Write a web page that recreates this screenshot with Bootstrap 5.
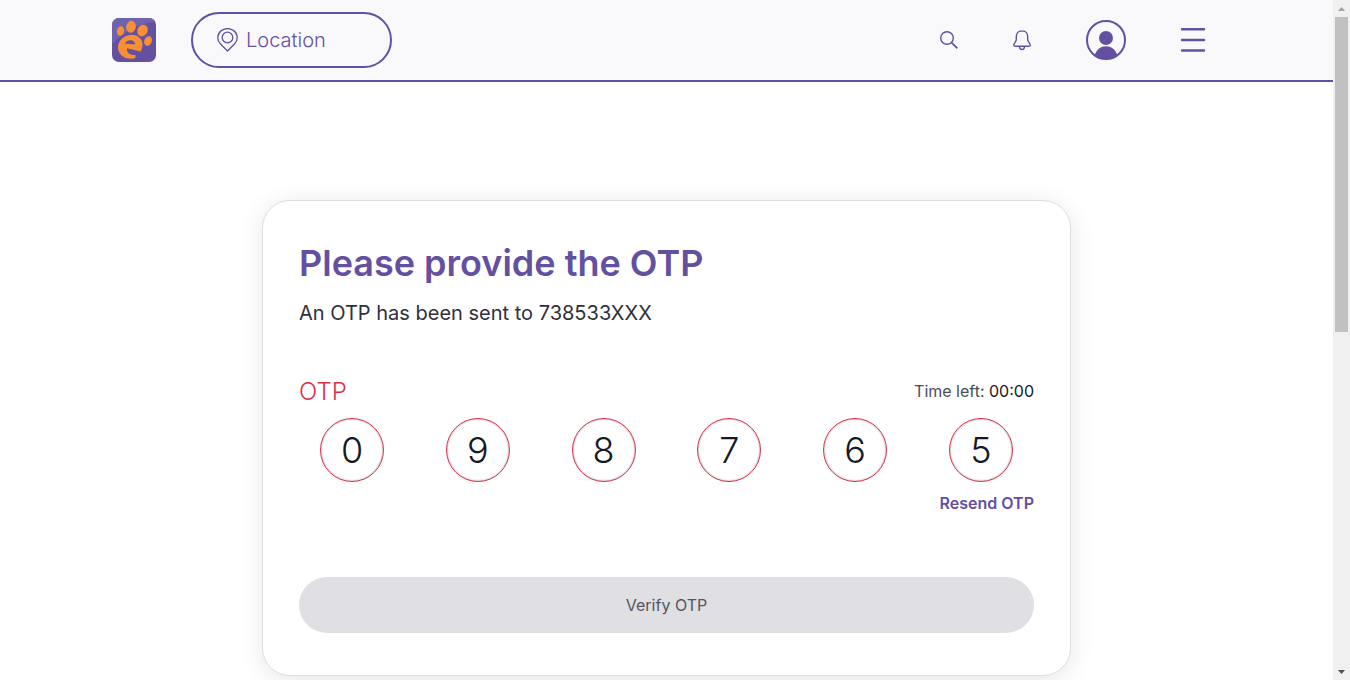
<!DOCTYPE html>
<html lang="en">
<head>
<meta charset="utf-8">
<meta name="viewport" content="width=device-width, initial-scale=1">
<title>Verify OTP</title>
<link href="https://cdn.jsdelivr.net/npm/bootstrap@5.3.0/dist/css/bootstrap.min.css" rel="stylesheet">
<style>
  :root { --brand: #6350a1; --ink: #171725; --alert: #dc3048; }
  body { font-family: Inter, "Liberation Sans", sans-serif; color: var(--ink); }
  .brand-text { color: var(--brand); }
  .topbar { height: 82px; background: #f9f9fc; border-bottom: 2px solid var(--brand); }
  .topbar-inner { max-width: 1109px; padding-right: 15px; }
  .location-btn { width: 201px; height: 56px; margin-left: 35px; padding: 0 24px; border: 2px solid var(--brand); border-radius: 28px; font-size: 20px; font-weight: 300; color: var(--brand); }
  .icon-btn { border: 0; background: none; padding: 0; color: var(--brand); line-height: 0; }
  .tools { column-gap: 54px; }
  .otp-card { max-width: 809px; margin-top: 118px; padding: 42px 36px; border: 1px solid #dedee2; border-radius: 28px; box-shadow: 0 4px 24px rgba(0, 0, 0, .1); }
  .otp-title { font-size: 36px; line-height: 40px; font-weight: 600; }
  .otp-note { font-size: 20px; line-height: 28px; font-weight: 400; color: #30303d; }
  .otp-label { font-size: 24px; line-height: 34px; font-weight: 300; color: var(--alert); }
  .text-16 { font-size: 16px; line-height: 24px; }
  .timer { font-weight: 400; color: #4c4c58; }
  .timer strong { font-weight: 400; color: var(--ink); }
  .digits { margin: 9px 0; padding: 0 21px; }
  .digit { width: 64px; height: 64px; padding: 0; border: 1px solid var(--alert); border-radius: 50%; font-size: 36px; font-weight: 300; color: var(--ink); box-shadow: inset 0 0 2px rgba(0, 0, 0, .45); }
  .resend { font-weight: 600; }
  .verify-btn { height: 56px; margin-top: 62px; border: 0; border-radius: 28px; background: #e0dfe4; color: #55555f; font-weight: 400; }
  .scroll-rail { width: 17px; background: #f0f0f0; }
  .scroll-thumb { width: 13px; height: 315px; background: #c1c1c1; }
  .scroll-cap { height: 17px; }
</style>
</head>
<body class="d-flex vh-100 overflow-hidden bg-white">
<div class="flex-grow-1 overflow-hidden">
  <header class="topbar d-flex">
    <nav class="topbar-inner w-100 mx-auto d-flex align-items-center" aria-label="Main">
      <a href="#" class="d-flex" aria-label="Home">
        <svg width="44" height="44" viewBox="0 0 44 44">
          <defs><clipPath id="tile"><rect width="44" height="44" rx="7"/></clipPath></defs>
          <g clip-path="url(#tile)">
            <rect width="44" height="44" fill="#6350a1"/>
            <path d="M0 0H44V4C29 5 15 11 0 26Z" fill="#7063ae"/>
          </g>
          <g fill="#f98f35">
            <ellipse cx="8.500" cy="13" rx="3.600" ry="4.900" transform="rotate(10 8.500 13)"/>
            <ellipse cx="19" cy="8.800" rx="4.800" ry="6" transform="rotate(12 19 8.800)"/>
            <ellipse cx="30.500" cy="12.500" rx="5" ry="6" transform="rotate(30 30.500 12.500)"/>
            <ellipse cx="36" cy="23" rx="3.700" ry="5" transform="rotate(22 36 23)"/>
            <path fill-rule="evenodd" d="M18 17C25 16 31 21 30.500 27C30.500 30 29.500 32 28.500 33.500L15 30.200C14 34 18 37.200 23 37C24.500 38.500 23.500 40.500 21 40.800C12 41.500 6 36 6 29.500C6 23 11 18 18 17ZM13 25.500L23 26.500C23.500 21.500 15 20.500 13 25.500Z"/>
          </g>
        </svg>
      </a>
      <button type="button" class="location-btn d-flex align-items-center bg-transparent">
        <svg class="me-2" width="21" height="24" viewBox="0 0 21 24" fill="none" stroke="#6350a1" stroke-width="1.300">
          <path d="M10.500 23L3.300 15.700C-.7 11.500 .4 5.100 4.700 2.400C8.300.1 12.700.1 16.300 2.400C20.600 5.100 21.700 11.500 17.700 15.700Z"/>
          <circle cx="10.500" cy="9.500" r="5.300"/>
        </svg>
        <span>Location</span>
      </button>
      <div class="tools ms-auto d-flex align-items-center">
        <button type="button" class="icon-btn" aria-label="Search">
          <svg width="18" height="20" viewBox="0 0 18 20" fill="none" stroke="currentColor" stroke-width="1.400"><circle cx="7" cy="8" r="6.300"/><path d="M11.600 12.600L17.400 18.400" stroke-width="1.700"/></svg>
        </button>
        <button type="button" class="icon-btn" aria-label="Notifications">
          <svg width="20" height="22" viewBox="0 0 20 22" fill="none" stroke="currentColor" stroke-width="1.400"><path d="M10 1.700C6.500 1.700 4.300 4.200 4.300 7.500V10.500C4.300 13 1.700 14.300 1.700 15.900C1.700 16.800 2.200 17.300 3.200 17.300H16.800C17.800 17.300 18.300 16.800 18.300 15.900C18.300 14.300 15.700 13 15.700 10.500V7.500C15.700 4.200 13.500 1.700 10 1.700ZM7.500 17.500C7.500 21.500 12.500 21.500 12.500 17.500"/></svg>
        </button>
        <button type="button" class="icon-btn" aria-label="Account">
          <svg width="40" height="40" viewBox="0 0 40 40"><defs><clipPath id="face"><circle cx="20" cy="20" r="19"/></clipPath></defs><g fill="currentColor" clip-path="url(#face)"><circle cx="20" cy="18" r="7"/><path d="M8.500 36C10.500 29 15 26.300 20 26.300S29.500 29 31.500 36L27 40H13Z"/></g><circle cx="20" cy="20" r="19" fill="none" stroke="currentColor" stroke-width="2"/></svg>
        </button>
        <button type="button" class="icon-btn" aria-label="Menu">
          <svg width="26" height="26" viewBox="0 0 26 26" stroke="currentColor" stroke-width="2.400" stroke-linecap="round"><path d="M2 2.300H24M2 13H24M2 23.500H24"/></svg>
        </button>
      </div>
    </nav>
  </header>

  <main class="px-3">
    <form class="otp-card mx-auto bg-white">
      <h1 class="otp-title brand-text mb-3">Please provide the OTP</h1>
      <p class="otp-note mb-5">An OTP has been sent to 738533XXX</p>
      <div class="d-flex justify-content-between align-items-start">
        <label class="otp-label" for="d1">OTP</label>
        <span class="timer text-16 pt-1">Time left: <strong>00:00</strong></span>
      </div>
      <div class="digits d-flex justify-content-between">
        <input id="d1" class="digit text-center" type="text" inputmode="numeric" maxlength="1" value="0" aria-label="OTP digit 1">
        <input class="digit text-center" type="text" inputmode="numeric" maxlength="1" value="9" aria-label="OTP digit 2">
        <input class="digit text-center" type="text" inputmode="numeric" maxlength="1" value="8" aria-label="OTP digit 3">
        <input class="digit text-center" type="text" inputmode="numeric" maxlength="1" value="7" aria-label="OTP digit 4">
        <input class="digit text-center" type="text" inputmode="numeric" maxlength="1" value="6" aria-label="OTP digit 5">
        <input class="digit text-center" type="text" inputmode="numeric" maxlength="1" value="5" aria-label="OTP digit 6">
      </div>
      <div class="text-end text-16"><a href="#" class="resend brand-text text-decoration-none">Resend OTP</a></div>
      <button type="submit" class="verify-btn w-100 text-16" disabled>Verify OTP</button>
    </form>
  </main>
</div>

<div class="scroll-rail flex-shrink-0 d-flex flex-column align-items-center" aria-hidden="true">
  <div class="scroll-cap d-flex align-items-center"><svg width="7" height="4" viewBox="0 0 7 4"><path d="M0 4L3.500 0L7 4Z" fill="#a0a0a0"/></svg></div>
  <div class="scroll-thumb"></div>
  <div class="scroll-cap mt-auto d-flex align-items-center"><svg width="7" height="4" viewBox="0 0 7 4"><path d="M0 0L3.500 4L7 0Z" fill="#505050"/></svg></div>
</div>
<script src="https://cdn.jsdelivr.net/npm/bootstrap@5.3.0/dist/js/bootstrap.bundle.min.js"></script>
</body>
</html>
